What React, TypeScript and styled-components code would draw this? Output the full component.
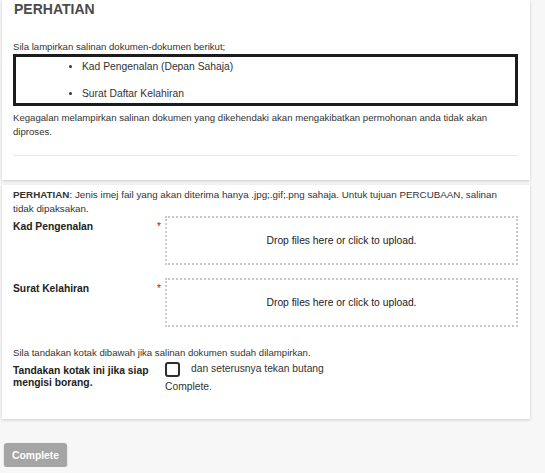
import React from 'react';
import styled, { createGlobalStyle } from 'styled-components';

const GlobalStyle = createGlobalStyle`
  html, body {
    margin: 0;
    padding: 0;
    background: #f7f7f7;
  }
  body {
    font-family: "Liberation Sans", Arial, sans-serif;
    font-size: 10.3px;
    color: #333;
  }
`;

const Page = styled.div`
  display: flex;
  flex-direction: column;
  align-items: flex-start;
  padding-left: 2px;
`;

const Card = styled.section<{ $top?: number; $pt?: number; $pb?: number }>`
  box-sizing: border-box;
  width: 528px;
  margin-top: ${(p) => p.$top ?? 0}px;
  padding: ${(p) => p.$pt ?? 0}px 12px ${(p) => p.$pb ?? 0}px 11px;
  background: #fff;
  box-shadow: 0 1px 3px rgba(0, 0, 0, 0.18);
`;

const Title = styled.h2`
  margin: 0;
  padding-left: 1px;
  font-size: 14px;
  line-height: 18px;
  font-weight: bold;
  color: #4a4a4a;
`;

const Para = styled.p<{ $top?: number; $lh?: number; $size?: number; $right?: number }>`
  margin: ${(p) => p.$top ?? 0}px 0 0;
  padding-right: ${(p) => p.$right ?? 0}px;
  font-size: ${(p) => p.$size ?? 9.6}px;
  line-height: ${(p) => p.$lh ?? 14}px;
`;

const DocBox = styled.ul`
  margin: 0;
  padding: 3px 0 2px 66px;
  border: 3px solid #1c1c1c;
  list-style: disc;
`;

const DocItem = styled.li`
  line-height: 14px;
  & + & {
    margin-top: 13px;
  }
`;

const Divider = styled.hr`
  margin: 16px 0 0;
  border: 0;
  border-top: 1px solid #e8e8e8;
`;

const FieldRow = styled.div<{ $top?: number }>`
  display: grid;
  grid-template-columns: 142px 10px 1fr;
  margin-top: ${(p) => p.$top ?? 0}px;
`;

const FieldLabel = styled.div<{ $pt?: number; $lh?: number }>`
  padding-top: ${(p) => p.$pt ?? 0}px;
  font-weight: bold;
  line-height: ${(p) => p.$lh ?? 14}px;
  color: #222;
`;

const Required = styled.span`
  padding: 4px 4px 0 0;
  text-align: right;
  color: #e4002b;
  line-height: 14px;
`;

const DropZone = styled.div`
  box-sizing: border-box;
  height: 49px;
  display: flex;
  align-items: center;
  justify-content: center;
  border: 2px dotted #c9c9c9;
  color: #222;
  cursor: pointer;
`;

const ConfirmBlock = styled.div`
  display: flex;
  flex-direction: column;
`;

const ConfirmLine = styled.label`
  display: flex;
  align-items: center;
  gap: 11px;
`;

const Check = styled.input`
  appearance: none;
  margin: 0;
  box-sizing: border-box;
  width: 15px;
  height: 15px;
  border: 2px solid #2d2d2d;
  border-radius: 3px;
  background: #fff;
`;

const ConfirmText = styled.span`
  line-height: 14px;
  margin-top: -1px;
`;

const ConfirmTail = styled.span`
  margin-top: 3px;
  line-height: 14px;
`;

const SubmitButton = styled.button`
  margin: 24px 0 0 2px;
  width: 63px;
  height: 24px;
  padding: 0;
  border: 0;
  border-radius: 3px;
  background: #a5a5a5;
  color: #fff;
  font-family: "Liberation Sans", Arial, sans-serif;
  font-size: 10.3px;
  font-weight: bold;
  box-shadow: 0 1px 2px rgba(0, 0, 0, 0.2);
  cursor: default;
`;

const uploads = ['Kad Pengenalan', 'Surat Kelahiran'];

export default function App() {
  return (
    <>
      <GlobalStyle />
      <Page>
        <Card $pb={24}>
          <Title>PERHATIAN</Title>
          <Para $top={22}>Sila lampirkan salinan dokumen-dokumen berikut;</Para>
          <DocBox>
            <DocItem>Kad Pengenalan (Depan Sahaja)</DocItem>
            <DocItem>Surat Daftar Kelahiran</DocItem>
          </DocBox>
          <Para $top={5}>
            Kegagalan melampirkan salinan dokumen yang dikehendaki akan mengakibatkan permohonan anda tidak akan
            diproses.
          </Para>
          <Divider />
        </Card>

        <Card $top={5} $pt={3} $pb={25}>
          <Para $lh={13.5} $size={9.8} $right={14}>
            <b>PERHATIAN</b>: Jenis imej fail yang akan diterima hanya .jpg;.gif;.png sahaja. Untuk tujuan PERCUBAAN,
            salinan tidak dipaksakan.
          </Para>
          {uploads.map((name, i) => (
            <FieldRow key={name} $top={i === 0 ? 0.5 : 13.5}>
              <FieldLabel $pt={4}>{name}</FieldLabel>
              <Required>*</Required>
              <DropZone>Drop files here or click to upload.</DropZone>
            </FieldRow>
          ))}
          <Para $top={19}>Sila tandakan kotak dibawah jika salinan dokumen sudah dilampirkan.</Para>
          <FieldRow $top={2}>
            <FieldLabel $pt={3} $lh={12}>
              Tandakan kotak ini jika siap mengisi borang.
            </FieldLabel>
            <span />
            <ConfirmBlock>
              <ConfirmLine>
                <Check type="checkbox" />
                <ConfirmText>dan seterusnya tekan butang</ConfirmText>
              </ConfirmLine>
              <ConfirmTail>Complete.</ConfirmTail>
            </ConfirmBlock>
          </FieldRow>
        </Card>

        <SubmitButton type="button">Complete</SubmitButton>
      </Page>
    </>
  );
}
